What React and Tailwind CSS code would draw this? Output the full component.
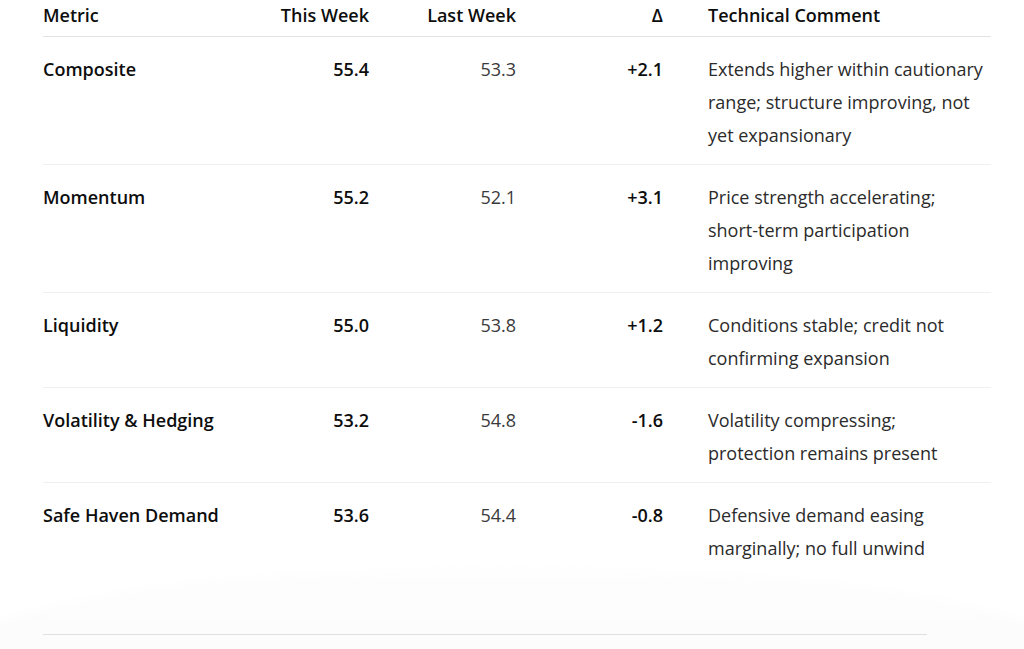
const rows = [
  {
    metric: 'Composite',
    thisWeek: '55.4',
    lastWeek: '53.3',
    delta: '+2.1',
    comment: ['Extends higher within cautionary', 'range; structure improving, not', 'yet expansionary'],
  },
  {
    metric: 'Momentum',
    thisWeek: '55.2',
    lastWeek: '52.1',
    delta: '+3.1',
    comment: ['Price strength accelerating;', 'short-term participation', 'improving'],
  },
  {
    metric: 'Liquidity',
    thisWeek: '55.0',
    lastWeek: '53.8',
    delta: '+1.2',
    comment: ['Conditions stable; credit not', 'confirming expansion'],
  },
  {
    metric: 'Volatility & Hedging',
    thisWeek: '53.2',
    lastWeek: '54.8',
    delta: '-1.6',
    comment: ['Volatility compressing;', 'protection remains present'],
  },
  {
    metric: 'Safe Haven Demand',
    thisWeek: '53.6',
    lastWeek: '54.4',
    delta: '-0.8',
    comment: ['Defensive demand easing', 'marginally; no full unwind'],
  },
];

const cols = 'grid grid-cols-[206px_120px_147px_147px_328px]';

export default function App() {
  return (
    <div
      className="relative h-[649px] w-[1024px] overflow-hidden bg-white text-[#0d0d0d]"
      style={{ fontFamily: '"Open Sans", "Noto Sans", sans-serif' }}
    >
      <div className="ml-[43px] w-[948px]">
        {/* header */}
        <div className={`${cols} border-b border-[#e3e3e3] pb-[6px] text-[18px] leading-[30px] font-semibold`}>
          <div>Metric</div>
          <div className="text-right">This Week</div>
          <div className="text-right">Last Week</div>
          <div className="text-right">Δ</div>
          <div className="pl-[45px]">Technical Comment</div>
        </div>

        {rows.map((r, i) => (
          <div
            key={r.metric}
            className={`${cols} pt-[16px] pb-[12px] text-[18px] leading-[33px] ${
              i < rows.length - 1 ? 'border-b border-[#f0f0f0]' : ''
            }`}
          >
            <div className="font-semibold">{r.metric}</div>
            <div className="text-right font-semibold">{r.thisWeek}</div>
            <div className="text-right text-[#3a3a3a]">{r.lastWeek}</div>
            <div className="text-right font-semibold">{r.delta}</div>
            <div className="pl-[45px] text-[#2b2b2b]">
              {r.comment.map((line) => (
                <div key={line} className="whitespace-nowrap">
                  {line}
                </div>
              ))}
            </div>
          </div>
        ))}
      </div>

      {/* soft fade over the bottom of the thread */}
      <div className="pointer-events-none absolute left-[-60px] right-[-60px] top-[565px] h-[200px] rounded-[50%] bg-gradient-to-b from-[#fefefe] to-[#f9f9f9] blur-[3px]" />

      <div className="absolute left-[43px] top-[634px] h-px w-[884px] bg-[#e0e0e0]" />
    </div>
  );
}
